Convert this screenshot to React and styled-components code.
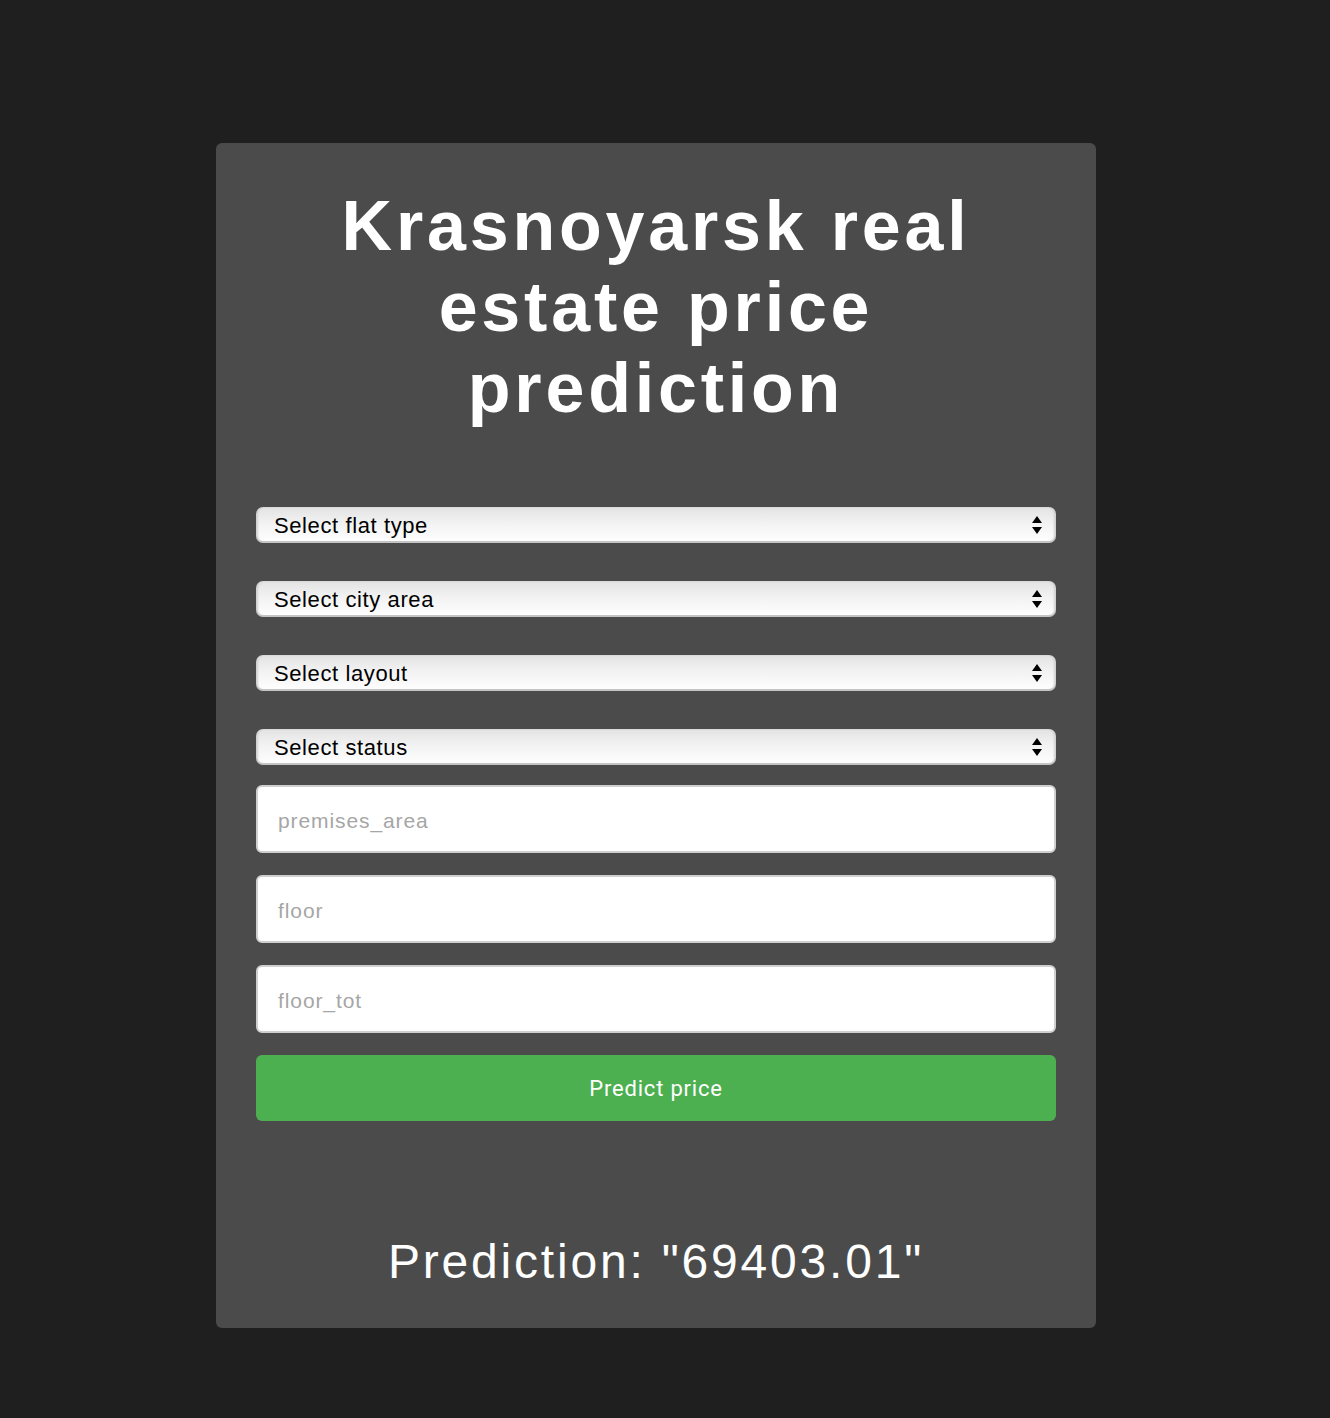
import styled, { createGlobalStyle } from 'styled-components';

const GlobalStyle = createGlobalStyle`
  html, body {
    margin: 0;
    padding: 0;
    background: #1f1f1f;
  }
  * {
    box-sizing: border-box;
  }
`;

const arrows =
  "url(\"data:image/svg+xml;utf8,<svg xmlns='http://www.w3.org/2000/svg' width='10' height='18' viewBox='0 0 10 18'><path d='M5 0 L10 7 L0 7 Z M0 11 L10 11 L5 18 Z' fill='black'/></svg>\")";

const fields = [
  'Select flat type',
  'Select city area',
  'Select layout',
  'Select status',
];

const inputs = ['premises_area', 'floor', 'floor_tot'];

const App = () => {
  return (
    <Page>
      <GlobalStyle />
      <Card>
        <Title>
          Krasnoyarsk real
          <br />
          estate price
          <br />
          prediction
        </Title>
        <Form onSubmit={(e) => e.preventDefault()}>
          <Selects>
            {fields.map((f) => (
              <Select key={f} defaultValue=''>
                <option value='' disabled>
                  {f}
                </option>
              </Select>
            ))}
          </Selects>
          <Inputs>
            {inputs.map((p) => (
              <Input key={p} type='text' placeholder={p} />
            ))}
            <Button type='submit'>Predict price</Button>
          </Inputs>
        </Form>
        <Result>Prediction: "69403.01"</Result>
      </Card>
    </Page>
  );
};

const Page = styled.main`
  min-height: 1418px;
  display: flex;
  justify-content: center;
  align-items: flex-start;
  padding: 143px 18px 0 0;
`;

const Card = styled.section`
  width: 880px;
  background: #4b4b4b;
  border-radius: 6px;
  padding: 43px 40px 39px;
  display: flex;
  flex-direction: column;
  align-items: center;
`;

const Title = styled.h1`
  margin: 0;
  font-family: 'Liberation Sans', Arial, sans-serif;
  font-weight: 700;
  font-size: 70px;
  line-height: 81px;
  letter-spacing: 3.8px;
  color: #fff;
  text-align: center;
`;

const Form = styled.form`
  width: 100%;
  margin-top: 78px;
  display: flex;
  flex-direction: column;
  gap: 20px;
`;

const Selects = styled.div`
  display: flex;
  flex-direction: column;
  gap: 38px;
`;

const Select = styled.select`
  appearance: none;
  width: 100%;
  height: 36px;
  padding: 0 36px 0 18px;
  font-family: 'Liberation Sans', Arial, sans-serif;
  font-size: 22px;
  letter-spacing: 0.6px;
  color: #000;
  border: none;
  border-radius: 7px;
  background: ${arrows} no-repeat right 14px center,
    linear-gradient(180deg, #e3e3e3 0%, #f2f2f2 45%, #ffffff 100%);
  box-shadow: inset 0 -2px 0 #c4c4c4, inset 2px 0 2px #d0d0d0,
    inset -2px 0 2px #d0d0d0;
  outline: none;
`;

const Inputs = styled.div`
  display: flex;
  flex-direction: column;
  gap: 22px;
`;

const Input = styled.input`
  width: 100%;
  height: 68px;
  padding: 4px 20px 0;
  font-family: 'Liberation Sans', Arial, sans-serif;
  font-size: 21px;
  letter-spacing: 0.9px;
  color: #222;
  background: #fff;
  border: 2px solid #cfcfcf;
  border-radius: 6px;
  outline: none;

  &::placeholder {
    color: #a6a6a6;
  }
`;

const Button = styled.button`
  width: 100%;
  height: 66px;
  border: none;
  border-radius: 6px;
  background: #4caf50;
  color: #fff;
  font-family: Roboto, 'Liberation Sans', sans-serif;
  font-size: 22px;
  font-weight: 400;
  letter-spacing: 0.8px;
  cursor: pointer;
`;

const Result = styled.p`
  margin: 113px 0 0;
  font-family: 'Liberation Sans', Arial, sans-serif;
  font-size: 48px;
  line-height: 55px;
  letter-spacing: 2.8px;
  color: #fff;
  text-align: center;
`;

export default App;
